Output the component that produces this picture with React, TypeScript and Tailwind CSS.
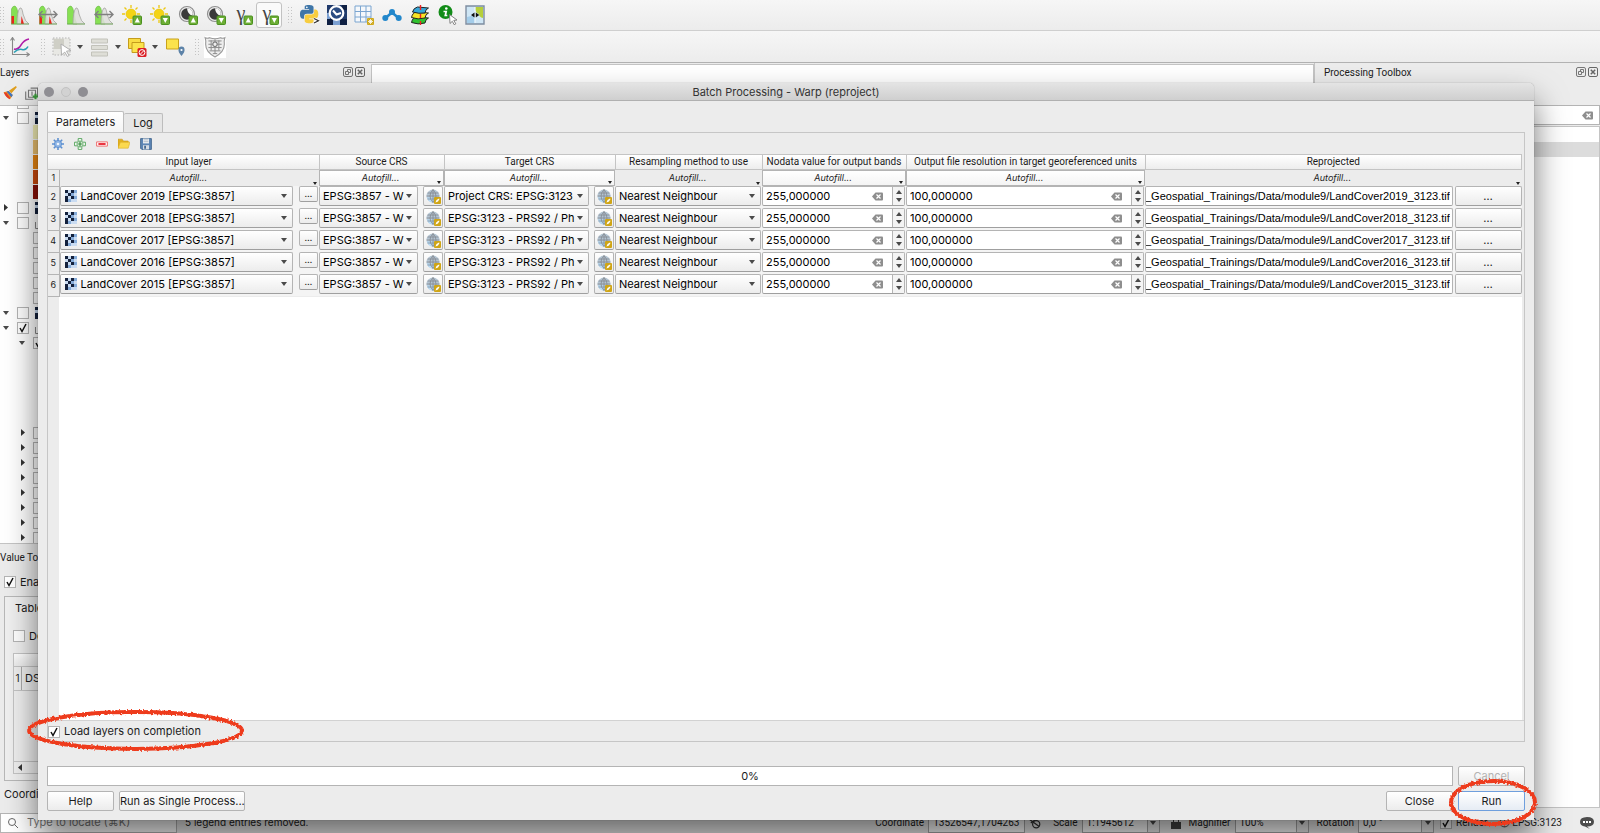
import type { ReactNode } from "react";
import clsx from "clsx";

const layers = [
  { year: 2019, target: "Project CRS: EPSG:3123" },
  { year: 2018, target: "EPSG:3123 - PRS92 / Ph" },
  { year: 2017, target: "EPSG:3123 - PRS92 / Ph" },
  { year: 2016, target: "EPSG:3123 - PRS92 / Ph" },
  { year: 2015, target: "EPSG:3123 - PRS92 / Ph" }
];

const columns = [
  { title: "Input layer", width: "w-[260px]", raised: false },
  { title: "Source CRS", width: "w-[125px]", raised: true },
  { title: "Target CRS", width: "w-[171px]", raised: true },
  { title: "Resampling method to use", width: "w-[147px]", raised: false },
  { title: "Nodata value for output bands", width: "w-[144px]", raised: true },
  { title: "Output file resolution in target georeferenced units", width: "w-[239px]", raised: true },
  { title: "Reprojected", width: "w-auto", raised: false }
];

const smallText = "font-['Roboto','Liberation_Sans',sans-serif] text-[10px]";

/* ---------- small drawings ---------- */

const Svg = ({ size = 20, children }: { size?: number; children: ReactNode }) => (
  <svg width={size} height={size} viewBox="0 0 20 20" fill="none" aria-hidden="true" className="shrink-0">
    {children}
  </svg>
);

const Caret = ({ className }: { className?: string }) => (
  <svg width="6" height="4" viewBox="0 0 6 4" aria-hidden="true" className={clsx("shrink-0", className)}>
    <path d="M0 0h6L3 4z" fill="#4a4a4a" />
  </svg>
);

const CaretRight = () => (
  <svg width="4" height="7" viewBox="0 0 4 7" aria-hidden="true" className="shrink-0">
    <path d="M0 0v7l4-3.5z" fill="#333" />
  </svg>
);

const Histogram = ({ red = false, arrow = false }: { red?: boolean; arrow?: boolean }) => (
  <Svg>
    <path d="M1.500 19V4q1-3 3.500-3 2 1 3 7 1 8 3 11z" fill="#86e052" stroke="#69b844" strokeWidth=".6" />
    <path d="M7 19q0-13 3-16 2-1 3 6 2 8 6 10z" fill="#dededa" fillOpacity=".85" stroke="#a3a3a0" strokeWidth=".8" />
    {red && <path d="M1.500 11v8H4v-8zM11.500 11l2.500 8h-3z" fill="#e8241e" />}
    <path d="M1 19h18" stroke="#6fae55" strokeWidth=".8" />
    {arrow && <path d="M1 9.500h18M4.500 6L1 9.500 4.500 13M15.500 6L19 9.500 15.500 13" stroke="#808080" strokeWidth="1.4" />}
  </Svg>
);

const Badge = ({ down }: { down: boolean }) => (
  <>
    <rect x="11" y="11" width="8.500" height="8.500" rx="1" fill="#6cae34" stroke="#4b9020" />
    <path d={down ? "M12.700 13h5.200l-2.600 5z" : "M12.700 17.500h5.200l-2.600-5z"} fill="#fff" />
  </>
);

const Brightness = ({ down = false }: { down?: boolean }) => (
  <Svg>
    <path d="M9 0v3M9 15v3M0 9h3M15 9h3M2.500 2.500l2 2M15.500 2.500l-2 2M2.500 15.500l2-2" stroke="#ecc811" strokeWidth="1.300" />
    <circle cx="9" cy="9" r="5" fill="#f4d416" stroke="#e6be00" strokeWidth=".6" />
    <Badge down={down} />
  </Svg>
);

const Contrast = ({ down = false }: { down?: boolean }) => (
  <Svg>
    <circle cx="9" cy="9" r="7.500" fill="#ededed" stroke="#8f8f8f" strokeWidth="1.200" />
    <circle cx="9" cy="9" r="5.800" fill="#3a3a3a" />
    <path d="M9 3.200a5.800 5.800 0 0 1 5.500 7.600Q9.500 9 9 3.200z" fill="#f7f7f7" />
    <Badge down={down} />
  </Svg>
);

const Gamma = ({ down = false }: { down?: boolean }) => (
  <span className="grid h-5 w-5">
    <span className="pr-1 text-center font-['Liberation_Serif',serif] text-xl leading-4 text-[#444] [grid-area:1/1]">γ</span>
    <span className="[grid-area:1/1]">
      <Svg>
        <Badge down={down} />
      </Svg>
    </span>
  </span>
);

const Python = () => (
  <Svg>
    <g transform="scale(.76)">
      <path
        fill="#3f76a8"
        d="M14.25.18l.9.2.73.26.59.3.45.32.34.34.25.34.16.33.1.3.04.26.02.2-.01.13V8.5l-.05.63-.13.55-.21.46-.26.38-.3.31-.33.25-.35.19-.35.14-.33.1-.3.07-.26.04-.21.02H8.77l-.69.05-.59.14-.5.22-.41.27-.33.32-.27.35-.2.36-.15.37-.1.35-.07.32-.04.27-.02.21v3.06H3.17l-.21-.03-.28-.07-.32-.12-.35-.18-.36-.26-.36-.36-.35-.46-.32-.59-.28-.73-.21-.88-.14-1.05-.05-1.23.06-1.22.16-1.04.24-.87.32-.71.36-.57.4-.44.42-.33.42-.24.4-.16.36-.1.32-.05.24-.01h.16l.06.01h8.16v-.83H6.18l-.01-2.75-.02-.37.05-.34.11-.31.17-.28.25-.26.31-.23.38-.2.44-.18.51-.15.58-.12.64-.1.71-.06.77-.04.84-.02 1.27.05z"
      />
      <path
        fill="#f7cd3f"
        d="M21.04 6.11l.28.06.32.12.35.18.36.27.36.35.35.47.32.59.28.73.21.88.14 1.04.05 1.23-.06 1.23-.16 1.04-.24.86-.32.71-.36.57-.4.45-.42.33-.42.24-.4.16-.36.09-.32.05-.24.02-.16-.01h-8.22v.82h5.84l.01 2.76.02.36-.05.34-.11.31-.17.29-.25.25-.31.24-.38.2-.44.17-.51.15-.58.13-.64.09-.71.07-.77.04-.84.01-1.27-.04-1.07-.14-.9-.2-.73-.25-.59-.3-.45-.33-.34-.34-.25-.34-.16-.33-.1-.3-.04-.25-.02-.2.01-.13v-5.34l.05-.64.13-.54.21-.46.26-.38.3-.32.33-.24.35-.2.35-.14.33-.1.3-.06.26-.04.21-.02.13-.01h5.84l.69-.05.59-.14.5-.21.41-.28.33-.32.27-.35.2-.36.15-.36.1-.35.07-.32.04-.28.02-.21V6.07h2.09z"
      />
      <circle cx="9" cy="3.1" r="1.1" fill="#fff" />
    </g>
    <path d="M14 13.500l4.500 2.200-4.500 2.300" stroke="#fff" strokeWidth="2.600" />
    <path d="M14 13.500l4.500 2.200-4.500 2.300" stroke="#333" strokeWidth="1.200" />
  </Svg>
);

const ClockTile = () => (
  <Svg>
    <path d="M0 0h20v20H0z" fill="#1f3a6b" />
    <path d="M0 14h6v6H0zM13 14h7v6h-7zM15 0h5v5h-5z" fill="#0f2043" />
    <path d="M6 14h7v6H6zM0 8h3v6H0z" fill="#7ba0d2" />
    <circle cx="9.500" cy="8" r="6.800" fill="#2b4c82" stroke="#fff" strokeWidth="2.200" />
    <path d="M6 5.500l3.500 4 4.500-1.500" stroke="#fff" strokeWidth="2" />
  </Svg>
);

const GridIcon = () => (
  <Svg>
    <path d="M1 1h16v16H1z" fill="#f5f8fb" />
    <path d="M1 1h16v16H1zM6.500 1v16M12 1v16M1 6.500h16M1 12h16" stroke="#7ba5d0" />
    <rect x="13" y="13" width="7" height="7" rx="1" fill="#cfa91c" />
    <path d="M16.500 14v5M14 16.500h5M14.800 14.800l3.400 3.400M18.200 14.800l-3.400 3.400" stroke="#fff" strokeWidth=".8" />
  </Svg>
);

const Nodes = () => (
  <Svg>
    <path d="M3.500 13L10 7.500l6.500 5.500" stroke="#2287cb" strokeWidth="2.500" />
    <circle cx="10" cy="7" r="3" fill="#2287cb" />
    <circle cx="3.300" cy="13" r="3" fill="#2287cb" />
    <circle cx="16.700" cy="13" r="3" fill="#2287cb" />
  </Svg>
);

const Stack = () => (
  <Svg>
    <g stroke="#222" strokeLinejoin="round">
      <path d="M1.500 17.500q1-5 5-5.500l12 1q-3 1-3.500 5-7 2-13.500-.5z" fill="#2fc22f" />
      <path d="M1.500 12.500q1-5 5-5.500l12 1q-3 1-3.500 5-7 2-13.500-.5z" fill="#f8e424" />
      <path d="M2.500 7q1-4 5-5l11 1q-3 1-3.500 5-6 1-12.500-1z" fill="#35a8da" />
    </g>
    <path d="M10.500 0v5M10.500 9v4M10.500 16v4" stroke="#ee2222" strokeWidth="1.400" />
  </Svg>
);

const Info = () => (
  <Svg>
    <circle cx="7.500" cy="7" r="7" fill="#128c18" />
    <circle cx="8.300" cy="3.500" r="1.300" fill="#fff" />
    <path d="M5.500 6.500h2.700l-.9 4h2" stroke="#fff" strokeWidth="1.700" />
    <path d="M11.500 9.500l7.500 5.500-3.200.4 2 3.400-1.600.9-1.900-3.400-2.300 2.200z" fill="#fff" stroke="#777" strokeWidth=".9" />
  </Svg>
);

const Swipe = () => (
  <Svg>
    <path d="M1 1h18v18H1z" fill="#cfe6f5" stroke="#7e8da0" strokeWidth="1.400" />
    <path d="M10 2h8v11q-4-1-4-4-3-1-4-4z" fill="#b6cf3b" />
    <path d="M2 12l8-2v8H2z" fill="#a4cdea" />
    <path d="M10 2v16" stroke="#eef6fb" strokeWidth="1.300" />
    <path d="M9.500 7.500v5l-3.500-2.500zM10.800 7.500v5l3.500-2.500z" fill="#111" />
  </Svg>
);

const PlotIcon = () => (
  <Svg>
    <path d="M2.500 1v16.500H19M.5 3.500l2-3 2 3M16.500 15.500l3 2-3 2" stroke="#888" strokeWidth="1.100" />
    <path d="M4 12q4 1 7-4t8-6" stroke="#b01ea8" strokeWidth="1.500" />
    <path d="M4 15.500q4-4 8-3t6-3" stroke="#2ba0b4" strokeWidth="1.500" />
  </Svg>
);

const SelectIcon = () => (
  <Svg>
    <path d="M1 1h17v17H1z" fill="#e8e8e4" stroke="#b5b5b5" strokeDasharray="1.500 1.500" />
    <path d="M2 2h10v10H2z" fill="#cfcfc6" />
    <path d="M9 7l10 6.500-4.500.7 2.500 4.300-1.600 1-2.600-4.400L9.500 18z" fill="#fff" stroke="#b0b0b0" />
  </Svg>
);

const RowsIcon = () => (
  <Svg>
    <path d="M1.500 2h16v4h-16zM1.500 8.500h16v4h-16zM1.500 15h16v4h-16z" fill="#deded7" stroke="#c2c2ba" />
  </Svg>
);

const DeselectIcon = () => (
  <Svg>
    <path d="M1.500 1.500h12v10h-12z" fill="#f9dc45" stroke="#c49c1c" />
    <path d="M5 5.500h12v10H5z" fill="#fbe34c" stroke="#c49c1c" />
    <rect x="10.500" y="11" width="9" height="9" rx="1.500" fill="#da1f26" />
    <circle cx="15" cy="15.500" r="2.900" stroke="#fff" />
    <path d="M13 17.500l4-4" stroke="#fff" />
  </Svg>
);

const LocateIcon = () => (
  <Svg>
    <path d="M1.500 2h12v10h-12z" fill="#fbe34c" stroke="#c9a21b" />
    <path d="M16.500 19q-3.500-4-3-6.500a3 3 0 0 1 6 0q.5 2.500-3 6.500z" fill="#5d83a8" />
    <circle cx="16.500" cy="13" r="1.100" fill="#fff" />
  </Svg>
);

const Shield = () => (
  <Svg size={22}>
    <path d="M0 0h20v20H0z" fill="#fff" />
    <path d="M1 1.500q2 1 4 0 5 2 10 0 2 1 4 0-1 3-.5 6 0 7-8.500 11.500Q1.500 14.500 1.500 7.500 2 4.500 1 1.500z" fill="#eee" stroke="#999" />
    <path d="M4 4.500h12M4 7.500h4M12 7.500h4M4 10.500h12M5 13.500h10M8 16h4M10 3v13M6.500 4v9M13.500 4v9" stroke="#8c8c8c" strokeWidth=".9" />
    <circle cx="10" cy="7.500" r="2" fill="#eee" stroke="#777" />
  </Svg>
);

const RasterIcon = () => (
  <svg width="12" height="12" viewBox="0 0 4 4" aria-hidden="true" shapeRendering="crispEdges" className="shrink-0">
    <path d="M0 0h4v4H0z" fill="#c9dbf1" />
    <path d="M0 0h1v1H0zM2 0h1v1H2zM1 1h1v1H1zM0 2h1v2H0zM2 2h1v1H2z" fill="#14213c" />
    <path d="M3 0h1v1H3zM2 1h1v1H2zM1 3h1v1H1zM3 2h1v1H3z" fill="#86acd9" />
  </svg>
);

const Globe = () => (
  <svg width="15" height="15" viewBox="0 0 15 15" fill="none" aria-hidden="true">
    <circle cx="7" cy="7" r="6.500" fill="#b3c4d2" />
    <path d="M.8 8.500h12.400Q11.500 13.500 7 13.500T.8 8.500z" fill="#b5dbf7" />
    <path d="M.5 7h13M1.500 4h11M1.500 10h11M7 .5v13M7 .5Q1 7 7 13.500M7 .5q6 6.500 0 13" stroke="#83898f" strokeWidth=".8" />
    <rect x="8" y="8" width="7" height="7" rx="1" fill="#cfa516" />
    <path d="M9.500 13.500l1-2.500 2.500-1.500.5.5-1.500 2.500z" fill="#fff" />
  </svg>
);

const ClearIcon = () => (
  <svg width="11" height="9" viewBox="0 0 11 9" aria-hidden="true" className="shrink-0">
    <path d="M0 4.500L3.500.5H10q1 0 1 1v6q0 1-1 1H3.500z" fill="#8e8e8e" />
    <path d="M4.500 2.500l4 4M8.500 2.500l-4 4" stroke="#fff" strokeWidth="1.200" />
  </svg>
);

const DockButtons = () => (
  <div className="flex gap-[2px]">
    <button type="button" aria-label="Float panel" className="text-[#777]">
      <svg width="10" height="10" viewBox="0 0 10 10" fill="none" stroke="currentColor">
        <rect x=".5" y=".5" width="9" height="9" rx="1.500" />
        <path d="M2.500 4.500h3v3h-3zM4.500 4V2.500h3v3H6" />
      </svg>
    </button>
    <button type="button" aria-label="Close panel" className="text-[#666]">
      <svg width="10" height="10" viewBox="0 0 10 10" fill="none" stroke="currentColor">
        <rect x=".5" y=".5" width="9" height="9" rx="1.500" />
        <path d="M2.800 2.800l4.400 4.400M7.200 2.800L2.800 7.200" strokeWidth="1.500" />
      </svg>
    </button>
  </div>
);

const Grip = () => (
  <svg width="4" height="16" viewBox="0 0 4 16" aria-hidden="true" className="shrink-0">
    <path d="M.5 0v16M3.500 0v16" stroke="#c4c4c4" strokeDasharray="1 2" />
  </svg>
);

/* ---------- controls ---------- */

const ToolButton = ({
  label,
  className = "w-7",
  children
}: {
  label: string;
  className?: string;
  children: ReactNode;
}) => (
  <button type="button" aria-label={label} className={clsx("flex h-[26px] shrink-0 items-center justify-center", className)}>
    {children}
  </button>
);

const Checkbox = ({ id, checked = false, label }: { id?: string; checked?: boolean; label?: string }) => (
  <span className="grid h-3 w-3 shrink-0">
    <input
      id={id}
      type="checkbox"
      aria-label={label}
      defaultChecked={checked}
      className="peer h-3 w-3 appearance-none border border-[#b5b5b5] bg-white [grid-area:1/1]"
    />
    <svg viewBox="0 0 12 12" className="pointer-events-none invisible h-3 w-3 [grid-area:1/1] peer-checked:visible">
      <path d="M3 6l2 3.500L9 2" fill="none" stroke="#111" strokeWidth="1.500" />
    </svg>
  </span>
);

const control = "rounded-[2px] border border-[#b4b4b4] border-b-[#9f9f9f]";
const raised = "bg-linear-to-b from-white to-[#ececec]";

const Combo = ({ label, value, icon, pad = "pl-[3px]" }: { label: string; value: string; icon?: ReactNode; pad?: string }) => (
  <span className="grid min-w-0 flex-1 items-center">
    <select
      aria-label={label}
      className={clsx("h-5 w-full appearance-none pr-3 text-[11px] text-black [grid-area:1/1]", control, raised, pad)}
    >
      <option>{value}</option>
    </select>
    {icon && <span className="pointer-events-none ml-[5px] justify-self-start [grid-area:1/1]">{icon}</span>}
    <Caret className="pointer-events-none mr-[6px] justify-self-end [grid-area:1/1]" />
  </span>
);

const Spin = ({ label, value }: { label: string; value: string }) => (
  <div className={clsx("flex h-5 items-center bg-white", control)}>
    <input aria-label={label} defaultValue={value} className="min-w-0 flex-1 pl-[3px] text-[11px] text-black outline-none" />
    <button type="button" aria-label="Clear value" className="mr-[9px]">
      <ClearIcon />
    </button>
    <span className="flex h-full w-3 flex-col items-center justify-center gap-1 border-l border-[#b4b4b4] bg-[#f4f4f4]">
      <button type="button" aria-label="Increase">
        <Caret className="rotate-180" />
      </button>
      <button type="button" aria-label="Decrease">
        <Caret />
      </button>
    </span>
  </div>
);

const PushButton = ({
  children,
  className = "w-[67px] border-[#b4b4b4] bg-linear-to-b from-white to-[#ececec]",
  disabled = false
}: {
  children: ReactNode;
  className?: string;
  disabled?: boolean;
}) => (
  <button
    type="button"
    disabled={disabled}
    className={clsx("h-5 rounded-[2px] border text-[11px] leading-4", className, disabled && "text-[#b3b3b3]")}
  >
    {children}
  </button>
);

/* ---------- main window behind the dialog ---------- */

const Toolbars = () => (
  <header className="bg-[#f0f0f0]">
    <div className="flex h-[31px] items-center border-b border-[#cfcfcf] bg-linear-to-b from-[#f6f6f6] to-[#ececec]">
      <span className="flex w-[6px]">
        <Grip />
      </span>
      <ToolButton label="Local histogram stretch"><Histogram red /></ToolButton>
      <ToolButton label="Full histogram stretch"><Histogram red arrow /></ToolButton>
      <ToolButton label="Local cumulative cut"><Histogram /></ToolButton>
      <ToolButton label="Full cumulative cut"><Histogram arrow /></ToolButton>
      <ToolButton label="Increase brightness"><Brightness /></ToolButton>
      <ToolButton label="Decrease brightness"><Brightness down /></ToolButton>
      <ToolButton label="Increase contrast"><Contrast /></ToolButton>
      <ToolButton label="Decrease contrast"><Contrast down /></ToolButton>
      <ToolButton label="Increase gamma" className="w-[26px]"><Gamma /></ToolButton>
      <ToolButton label="Decrease gamma" className="w-[26px] rounded-[3px] border border-[#c2c2c2] bg-[#fafafa]">
        <Gamma down />
      </ToolButton>
      <span className="ml-[6px] mr-1">
        <Grip />
      </span>
      <ToolButton label="Python console" className="w-[27px]"><Python /></ToolButton>
      <ToolButton label="Temporal controller" className="w-[27px]"><ClockTile /></ToolButton>
      <ToolButton label="Grid"><GridIcon /></ToolButton>
      <ToolButton label="Network"><Nodes /></ToolButton>
      <ToolButton label="Layer stack"><Stack /></ToolButton>
      <ToolButton label="Value tool"><Info /></ToolButton>
      <ToolButton label="Map swipe" className="w-[26px]"><Swipe /></ToolButton>
    </div>
    <div className="flex h-8 items-center border-b border-[#b2b2b2] bg-linear-to-b from-[#f6f6f6] to-[#ececec]">
      <span className="flex w-[6px]">
        <Grip />
      </span>
      <ToolButton label="Profile plot"><PlotIcon /></ToolButton>
      <span className="mr-[3px] ml-[7px]">
        <Grip />
      </span>
      <ToolButton label="Select features"><SelectIcon /></ToolButton>
      <Caret className="mr-[3px] ml-[1px]" />
      <ToolButton label="Select by value"><RowsIcon /></ToolButton>
      <Caret className="mr-[2px] ml-[1px]" />
      <ToolButton label="Deselect features"><DeselectIcon /></ToolButton>
      <Caret className="mr-[3px] ml-[1px]" />
      <ToolButton label="Select by location"><LocateIcon /></ToolButton>
      <span className="mr-[2px] ml-[6px]">
        <Grip />
      </span>
      <ToolButton label="University"><Shield /></ToolButton>
    </div>
  </header>
);

const TreeRow = ({ open, checked, icon }: { open: boolean; checked?: boolean; icon: ReactNode }) => (
  <li className="flex h-[15px] items-center">
    <span className="flex w-[17px] justify-center pr-[5px]">{open ? <Caret /> : <CaretRight />}</span>
    <Checkbox label="Layer visible" checked={checked} />
    <span className="ml-[6px]">{icon}</span>
  </li>
);

const GroupIcon = () => (
  <svg width="12" height="12" viewBox="0 0 12 12" fill="none" stroke="#888" aria-hidden="true">
    <path d="M3.500 2.500h8v7h-8zM.5 5v6.500H9" />
  </svg>
);

const SwatchRow = ({ color }: { color: string }) => (
  <li className="h-[15px] pl-[33px]">
    <span className={clsx("block h-[14px] w-6", color)} />
  </li>
);

const ChildRow = ({ arrow, checked }: { arrow?: "open" | "closed"; checked?: boolean }) => (
  <li className="flex h-[15px] items-center">
    <span className="flex w-[33px] justify-end pr-2">
      {arrow === "open" && <Caret />}
      {arrow === "closed" && <CaretRight />}
    </span>
    <Checkbox label="Sublayer visible" checked={checked} />
  </li>
);

const LeftDock = () => (
  <aside className="flex w-[371px] shrink-0 flex-col overflow-hidden bg-[#ececec]">
    <div className={clsx("flex h-[18px] shrink-0 items-center justify-between pr-[6px]", smallText)}>
      <span>Layers</span>
      <DockButtons />
    </div>
    <div className="flex h-6 shrink-0 items-center gap-2 pl-[3px]">
      <Svg size={14}>
        <path d="M19 1l-7 8-2-2z" fill="#e0a020" stroke="#e0a020" strokeWidth="2" />
        <path d="M1 9l7-2 6 6-4 6q-6-2-9-10z" fill="#f08a1c" />
        <path d="M8 7l6 6-2 3-7-8z" fill="#3f76c0" />
        <path d="M1 9l4 1 5 7v2Q4 16 1 9z" fill="#e33a2c" />
      </Svg>
      <Svg size={14}>
        <path d="M5 6h10v10H5zM1 8v11h11M8 3h10v12M10 8v6" stroke="#777" strokeWidth="1.600" />
        <path d="M15 11v8M11 15h8" stroke="#3a9b3a" strokeWidth="3" />
      </Svg>
    </div>
    <ul className="h-[439px] shrink-0 overflow-hidden border-y border-[#c4c4c4] bg-white">
      <li className="h-1 pl-[17px]">
        <span className="block h-[3px] w-3 border border-t-0 border-[#b5b5b5]" />
      </li>
      <TreeRow open icon={<RasterIcon />} />
      <SwatchRow color="bg-[#f7f3b8]" />
      <SwatchRow color="bg-[#efc473]" />
      <SwatchRow color="bg-[#ee8a13]" />
      <SwatchRow color="bg-[#cf4a0c]" />
      <SwatchRow color="bg-[#8e1208]" />
      <TreeRow open={false} icon={<RasterIcon />} />
      <TreeRow open icon={<GroupIcon />} />
      <ChildRow />
      <ChildRow />
      <ChildRow />
      <ChildRow />
      <ChildRow />
      <TreeRow open icon={<RasterIcon />} />
      <TreeRow open checked icon={<GroupIcon />} />
      <ChildRow arrow="open" checked />
      <li className="h-[75px]" />
      <ChildRow arrow="closed" />
      <ChildRow arrow="closed" />
      <ChildRow arrow="closed" />
      <ChildRow arrow="closed" />
      <ChildRow arrow="closed" />
      <ChildRow arrow="closed" />
      <ChildRow arrow="closed" />
      <ChildRow arrow="closed" />
    </ul>
    <div className="flex min-h-0 flex-1 flex-col text-[11px]">
      <div className={clsx("flex h-[26px] items-center", smallText)}>Value Tool</div>
      <div className="flex h-6 items-center gap-1 pl-1">
        <Checkbox id="enable" checked />
        <label htmlFor="enable">Enable</label>
      </div>
      <div className="mt-[2px] ml-1 h-[185px] border border-[#b8b8b8] bg-[#efefef] pl-2">
        <div className="flex h-[22px] items-center pl-[2px]">Table</div>
        <div className="flex h-[34px] items-center gap-1">
          <Checkbox id="decimals" />
          <label htmlFor="decimals">Decimals</label>
        </div>
        <div className="flex h-[121px] flex-col border border-[#c4c4c4]">
          <div className="h-3 bg-linear-to-b from-white to-[#ececec]" />
          <div className="flex h-[25px] items-center border-y border-[#c4c4c4]">
            <span className="flex h-full w-2 items-center justify-center border-r border-[#aaa] text-[10px]">1</span>
            <span className="pl-[3px]">DSM</span>
          </div>
          <div className="flex-1" />
          <div className="flex h-3 items-center border-t border-[#c4c4c4] pl-1">
            <span className="rotate-180">
              <CaretRight />
            </span>
          </div>
        </div>
      </div>
      <div className="flex h-[26px] items-center pl-1">Coordinate</div>
    </div>
  </aside>
);

const RightDock = () => (
  <aside className="flex w-[286px] shrink-0 flex-col border-l border-[#c4c4c4] bg-[#ececec]">
    <div className={clsx("flex h-[18px] items-center justify-between pl-[9px] pr-[2px]", smallText)}>
      <span>Processing Toolbox</span>
      <DockButtons />
    </div>
    <div className="mt-6 flex h-5 items-center border border-[#b4b4b4] bg-white pr-[6px]">
      <input aria-label="Search toolbox" className="min-w-0 flex-1 outline-none" />
      <button type="button" aria-label="Clear search">
        <ClearIcon />
      </button>
    </div>
    <div className="mt-px flex-1 border-y border-r border-[#c4c4c4] bg-white">
      <div className="mt-[15px] h-[15px] bg-[#dcdcdc]" />
    </div>
  </aside>
);

const StatusField = ({
  id,
  label,
  value,
  width,
  arrow
}: {
  id: string;
  label: string;
  value: string;
  width: string;
  arrow?: boolean;
}) => (
  <>
    <label htmlFor={id} className="ml-2 mr-1">{label}</label>
    <span className={clsx("flex h-5 items-center border border-[#aaa] bg-white", width)}>
      <input id={id} defaultValue={value} className="min-w-0 flex-1 pl-1 outline-none" />
      {arrow && (
        <span className="flex h-full w-3 items-center justify-center border-l border-[#aaa] bg-[#eee]">
          <Caret />
        </span>
      )}
    </span>
  </>
);

const StatusBar = () => (
  <footer className={clsx("flex h-[25px] shrink-0 items-center bg-[#ececec] pt-1", smallText)}>
    <label className="flex h-5 w-[177px] items-center gap-2 border border-[#b4b4b4] bg-white pl-[6px]">
      <svg width="12" height="12" viewBox="0 0 12 12" fill="none" stroke="#666" aria-hidden="true">
        <circle cx="5" cy="5" r="3.500" />
        <path d="M7.500 7.500L11 11" />
      </svg>
      <input
        aria-label="Locate"
        placeholder="Type to locate (⌘K)"
        className="min-w-0 flex-1 font-['Inter',sans-serif] text-[11px] outline-none placeholder:text-[#777]"
      />
    </label>
    <span className="ml-2 font-['Inter',sans-serif]">5 legend entries removed.</span>
    <div className="ml-auto flex items-center">
      <StatusField id="coordinate" label="Coordinate" value="13526547,1704263" width="w-[97px]" />
      <span className="mx-1">
        <Svg size={12}>
          <circle cx="12" cy="12" r="6" stroke="#333" strokeWidth="2" />
          <path d="M1 4l16 12M3 10l8-6" stroke="#333" strokeWidth="2" />
        </Svg>
      </span>
      <StatusField id="scale" label="Scale" value="1:1945612" width="w-[78px]" arrow />
      <svg width="10" height="12" viewBox="0 0 10 12" className="ml-[11px]" aria-hidden="true">
        <path d="M0 5h10v7H0z" fill="#444" />
        <path d="M2.500 5V2.500q2.500-3 5 0V5" fill="none" stroke="#444" />
      </svg>
      <StatusField id="magnifier" label="Magnifier" value="100%" width="w-[74px]" arrow />
      <StatusField id="rotation" label="Rotation" value="0,0 °" width="w-[76px]" arrow />
      <span className="ml-[6px] flex items-center gap-1">
        <Checkbox id="render" checked />
        <label htmlFor="render">Render</label>
      </span>
      <a href="#crs" className="ml-3 flex items-center gap-[2px]">
        <Svg size={11}>
          <circle cx="10" cy="10" r="8" stroke="#666" strokeWidth="2" />
          <path d="M2 10h16M10 2v16" stroke="#666" strokeWidth="1.500" />
        </Svg>
        EPSG:3123
      </a>
      <button type="button" aria-label="Messages" className="mr-[6px] ml-[18px]">
        <svg width="14" height="12" viewBox="0 0 14 12" aria-hidden="true">
          <path d="M7 0q7 0 7 4.700T7 9.500l3 2.500-5-2.600Q0 9 0 4.700T7 0z" fill="#4c4c4c" />
          <path d="M3 4h2v2H3zM6 4h2v2H6zM9 4h2v2H9z" fill="#fff" />
        </svg>
      </button>
    </div>
  </footer>
);

/* ---------- batch dialog ---------- */

// long paths show their file name, not their root
const scrollToEnd = (input: HTMLInputElement | null) => {
  if (input) input.scrollLeft = input.scrollWidth;
};

const BatchTable = () => (
  <table className="w-full table-fixed border-collapse text-[11px]">
    <colgroup>
      <col className="w-[11px]" />
      {columns.map((column) => (
        <col key={column.title} className={column.width} />
      ))}
    </colgroup>
    <thead>
      <tr className={clsx("h-[15px] bg-linear-to-b from-white to-[#ececec] leading-3", smallText)}>
        <td className="border-y border-[#c4c4c4] p-0" />
        {columns.map((column) => (
          <th key={column.title} scope="col" className="border-y border-r border-[#c4c4c4] p-0 font-normal whitespace-nowrap">
            {column.title}
          </th>
        ))}
      </tr>
    </thead>
    <tbody>
      <tr className="h-4 leading-3">
        <th scope="row" className="border-r border-b border-[#b4b4b4] p-0 text-[9px] font-normal">1</th>
        {columns.map((column) => (
          <td key={column.title} className="p-0">
            <button
              type="button"
              className={clsx(
                "flex h-4 w-full items-center pr-[2px] text-[9px] leading-3 italic",
                column.raised && "border border-[#b4b4b4] bg-linear-to-b from-white to-[#f4f4f4]"
              )}
            >
              <span className="flex-1 pl-1 text-center">Autofill...</span>
              <svg width="4" height="3" viewBox="0 0 4 3" aria-hidden="true" className="mb-[1px] self-end">
                <path d="M0 0h4L2 3z" fill="#222" />
              </svg>
            </button>
          </td>
        ))}
      </tr>
      {layers.map((layer, index) => (
        <tr key={layer.year} className="h-[22px] bg-[#f4f4f4]">
          <th scope="row" className="border-r border-b border-[#b4b4b4] bg-[#ececec] p-0 text-[9px] font-normal">
            {index + 2}
          </th>
          <td className="p-0 pb-[2px]">
            <div className="flex items-start gap-[6px] pr-[1px]">
              <Combo label="Input layer" value={`LandCover ${layer.year} [EPSG:3857]`} icon={<RasterIcon />} pad="pl-5" />
              <button type="button" aria-label="Browse layer" className={clsx("h-4 w-[19px] text-[9px] leading-3", control, raised)}>
                …
              </button>
            </div>
          </td>
          <td className="p-0 pb-[2px]">
            <div className="flex items-center gap-[5px] pr-[1px]">
              <Combo label="Source CRS" value="EPSG:3857 - W" />
              <button type="button" aria-label="Select source CRS" className={clsx("flex h-5 w-5 items-center justify-center", control, raised)}>
                <Globe />
              </button>
            </div>
          </td>
          <td className="p-0 pb-[2px]">
            <div className="flex items-center gap-[5px] pr-[1px]">
              <Combo label="Target CRS" value={layer.target} />
              <button type="button" aria-label="Select target CRS" className={clsx("flex h-5 w-5 items-center justify-center", control, raised)}>
                <Globe />
              </button>
            </div>
          </td>
          <td className="p-0 pb-[2px]">
            <div className="flex pr-[1px]">
              <Combo label="Resampling method" value="Nearest Neighbour" />
            </div>
          </td>
          <td className="p-0 pr-[1px] pb-[2px]">
            <Spin label="Nodata value" value="255,000000" />
          </td>
          <td className="p-0 pr-[1px] pb-[2px]">
            <Spin label="Output resolution" value="100,000000" />
          </td>
          <td className="p-0 pb-[2px]">
            <div className="flex gap-[2px]">
              <input
                ref={scrollToEnd}
                aria-label="Reprojected file"
                defaultValue={`_Geospatial_Trainings/Data/module9/LandCover${layer.year}_3123.tif`}
                className={clsx(
                  "h-5 min-w-0 flex-1 bg-white pr-[2px] text-right font-['Liberation_Sans',sans-serif] text-[11px] text-black outline-none",
                  control
                )}
              />
              <button type="button" aria-label="Browse output file" className={clsx("h-5 w-[67px] text-[11px] leading-4", control, raised)}>
                …
              </button>
            </div>
          </td>
        </tr>
      ))}
    </tbody>
  </table>
);

const DialogTools = () => (
  <div className="flex h-[21px] shrink-0 items-center gap-[10px] pl-1">
    <button type="button" aria-label="Advanced settings">
      <Svg size={12}>
        <path d="M10 0v20M0 10h20M3 3l14 14M17 3L3 17" stroke="#5b8fd0" strokeWidth="2.600" />
        <circle cx="10" cy="10" r="6" fill="#8fb5e4" stroke="#5b8fd0" strokeWidth="1.500" />
        <circle cx="10" cy="10" r="2.200" fill="#eef4fc" />
      </Svg>
    </button>
    <button type="button" aria-label="Add row">
      <Svg size={12}>
        <path d="M7 1h6v6h6v6h-6v6H7v-6H1V7h6z" fill="#fff" stroke="#4a9e50" strokeWidth="1.500" />
        <path d="M10 4v12M4 10h12" stroke="#2f8a35" strokeWidth="2" />
      </Svg>
    </button>
    <button type="button" aria-label="Remove row">
      <Svg size={12}>
        <path d="M1 6.500h18v7H1z" fill="#fff" stroke="#ee6b6b" strokeWidth="1.600" />
        <path d="M4 10h12" stroke="#e81f2c" strokeWidth="3" />
      </Svg>
    </button>
    <button type="button" aria-label="Open batch file">
      <Svg size={12}>
        <path d="M0 17V2h7l2 3h8v3" fill="#e2b120" stroke="#c9981a" />
        <path d="M0 17L4 7h16l-3 10z" fill="#fbd94f" stroke="#dcb02a" />
      </Svg>
    </button>
    <button type="button" aria-label="Save batch file">
      <Svg size={12}>
        <path d="M1 1h18v18H3l-2-2z" fill="#5e86b5" stroke="#44688f" strokeWidth="1.500" />
        <path d="M5 1h10v8H5z" fill="#e9edf1" />
        <path d="M6 3h8M6 6h8" stroke="#98a6b4" />
        <path d="M5 12h10v7H5z" fill="#d5dce4" />
        <path d="M7 13h3v5H7z" fill="#44688f" />
      </Svg>
    </button>
  </div>
);

const MarkerEllipse = ({ className, width, height }: { className: string; width: number; height: number }) => (
  <svg width={width} height={height} aria-hidden="true" className={clsx("pointer-events-none absolute overflow-visible", className)}>
    <defs>
      <filter id={`rough-${width}`} x="-10%" y="-20%" width="120%" height="140%">
        <feTurbulence type="fractalNoise" baseFrequency=".5" numOctaves="2" seed="4" />
        <feDisplacementMap in="SourceGraphic" scale="4" xChannelSelector="R" yChannelSelector="G" />
      </filter>
    </defs>
    <ellipse
      cx={width / 2}
      cy={height / 2}
      rx={width / 2 - 2}
      ry={height / 2 - 2}
      fill="none"
      stroke="#ee3a1c"
      strokeWidth="4"
      filter={`url(#rough-${width})`}
    />
  </svg>
);

const BatchDialog = () => (
  <div
    role="dialog"
    aria-labelledby="dialog-title"
    className="absolute top-[83px] right-[66px] bottom-[13px] left-[38px] flex flex-col rounded-t-[5px] bg-[#ececec] shadow-[0_18px_32px_rgba(0,0,0,0.55),0_0_1px_rgba(0,0,0,0.5)]"
  >
    <div className="flex h-[18px] shrink-0 items-center rounded-t-[5px] border-b border-[#b0b0b0] bg-linear-to-b from-[#e4e4e4] to-[#cfcfcf] pr-[50px] pl-[6px]">
      <div className="flex gap-[7px]">
        <button type="button" aria-label="Close window" className="h-[10px] w-[10px] rounded-full bg-[#8f8e93]" />
        <button type="button" aria-label="Minimize window" className="h-[10px] w-[10px] rounded-full border border-[#c2c2c2] bg-[#d2d2d2]" />
        <button type="button" aria-label="Zoom window" className="h-[10px] w-[10px] rounded-full bg-[#8f8e93]" />
      </div>
      <h1 id="dialog-title" className="flex-1 text-center text-[11px] leading-4 text-[#333]">
        Batch Processing - Warp (reproject)
      </h1>
    </div>

    <div className="flex min-h-0 flex-1 flex-col px-[9px] pt-[10px] pb-[9px]">
      <div role="tablist" className="flex h-[21px] shrink-0 items-end text-[11px]">
        <button
          type="button"
          role="tab"
          aria-selected="true"
          className="h-[21px] w-[77px] rounded-t-[2px] border border-b-0 border-[#bdbdbd] bg-linear-to-b from-white to-[#f4f4f4]"
        >
          Parameters
        </button>
        <button
          type="button"
          role="tab"
          aria-selected="false"
          className="h-[19px] w-[39px] rounded-t-[2px] border border-b-0 border-l-0 border-[#bdbdbd] bg-[#e6e6e6]"
        >
          Log
        </button>
      </div>

      <div className="flex min-h-0 flex-1 flex-col border border-[#c6c6c6]">
        <DialogTools />
        <div className="mr-[2px] flex min-h-0 flex-1 flex-col">
          <BatchTable />
          <div className="ml-[11px] flex-1 bg-white" />
        </div>
        <div className="flex h-[21px] shrink-0 items-center gap-1 border-t border-[#d2d2d2] pt-[1px] text-[11px]">
          <Checkbox id="load-layers" checked />
          <label htmlFor="load-layers">Load layers on completion</label>
        </div>
      </div>

      <div className="mt-6 flex gap-[5px]">
        <div
          role="progressbar"
          aria-valuenow={0}
          aria-label="Batch progress"
          className="flex h-5 flex-1 items-center justify-center border border-[#b4b4b4] bg-white text-[11px]"
        >
          0%
        </div>
        <PushButton disabled>Cancel</PushButton>
      </div>
      <div className="mt-[5px] flex gap-[5px]">
        <PushButton>Help</PushButton>
        <PushButton className="w-[126px] border-[#b4b4b4] bg-linear-to-b from-white to-[#ececec] whitespace-nowrap">
          Run as Single Process...
        </PushButton>
        <span className="flex-1" />
        <PushButton>Close</PushButton>
        <PushButton className="w-[67px] border-[#6f9fdd] bg-linear-to-b from-white to-[#e6ecf4]">Run</PushButton>
      </div>
    </div>

    <MarkerEllipse className="bottom-[69px] left-[-11px]" width={217} height={41} />
    <MarkerEllipse className="right-[-3px] bottom-[-6px]" width={88} height={47} />
  </div>
);

export default function App() {
  return (
    <div className="relative flex h-screen flex-col overflow-hidden bg-[#ececec] font-['Inter','Liberation_Sans',sans-serif] text-[#1c1c1c]">
      <Toolbars />
      <div className="flex min-h-0 flex-1">
        <LeftDock />
        <main className="mt-[1px] flex-1 border border-[#c4c4c4] bg-white" />
        <RightDock />
      </div>
      <StatusBar />
      <BatchDialog />
    </div>
  );
}
